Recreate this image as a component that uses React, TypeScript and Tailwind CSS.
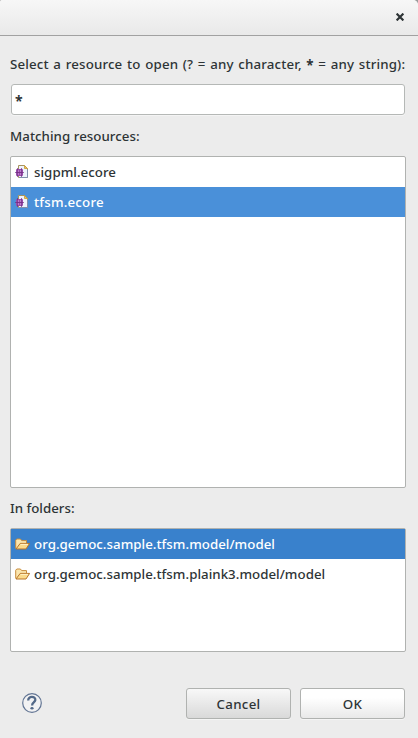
import type { ReactNode } from "react";

function EcoreIcon() {
  return (
    <svg width="16" height="16" viewBox="0 0 16 16" className="shrink-0">
      <path d="M3.5 1.5H9.5L12.5 4.5V13.5H3.5Z" fill="#eef3fc" stroke="#a79360" />
      <path d="M12.5 5.5V13.5H4" fill="none" stroke="#8290ad" />
      <path d="M9.5 1.5V4.5H12.5Z" fill="#edc45c" stroke="#c69a38" strokeWidth=".8" />
      <rect x="1" y="5" width="7" height="7" rx="1" fill="#9a4bab" />
      <path d="M2 6H4V8H2ZM5 6H7V8H5ZM2 9H4V11H2ZM5 9H7V11H5Z" fill="#bd78cc" />
      <path d="M2.5 4V13M6.5 4V13M0 8.5H9" stroke="#6d2c80" strokeWidth=".7" />
    </svg>
  );
}

function FolderIcon() {
  return (
    <svg width="16" height="16" viewBox="0 0 16 16" className="shrink-0">
      <path d="M.7 12.5V4.2L1.8 3H5.4L6.7 4.6H11.5V7.2" fill="#fbe6ae" stroke="#c88d3d" />
      <path d="M1 13L5.2 7.4H14.6L11 13Z" fill="#fbda8b" stroke="#b87428" strokeLinejoin="round" />
      <path d="M5.7 8.4H13" stroke="#fff2c9" />
    </svg>
  );
}

function Row({ icon, children, className }: { icon: ReactNode; children: ReactNode; className?: string }) {
  return (
    <div className={`flex h-[30px] items-center gap-[3px] pl-1 ${className ?? ""}`}>
      {icon}
      <span className="whitespace-nowrap tracking-[0.03px]">{children}</span>
    </div>
  );
}

export default function App() {
  return (
    <div className="h-[738px] w-[418px] bg-[#9b9b9b]">
      <div className="flex h-full flex-col overflow-hidden rounded-tl-[2px] rounded-tr-[5px] bg-[#ececec] font-['Noto_Sans','Open_Sans',sans-serif] text-[13.3px] leading-5 font-medium text-[#2e3436]">
        <header className="flex h-9 shrink-0 items-center justify-end border-b border-[#a1a1a1] bg-linear-to-b from-[#f7f7f7] to-[#e9e9e9] pr-[14px]">
          <svg width="8" height="8" viewBox="0 0 8 8" className="-mt-px">
            <path d="M.6.6L7.4 7.4M7.4.6L.6 7.4" stroke="#2e3436" strokeWidth="2.2" />
          </svg>
        </header>
        <main className="flex flex-1 flex-col pt-[18px] pr-3 pl-[10px]">
          <label className="h-5 whitespace-nowrap tracking-[0.15px] [word-spacing:1.05px]">
            Select a resource to open (? = any character, <span className="inline-block translate-y-px font-bold">*</span> = any string):
          </label>
          <div className="mx-px mt-[10px] flex h-[31px] shrink-0 items-center rounded-[3px] border border-[#b5b8b6] bg-white pt-[3px] pl-[3px] text-[14px] font-bold shadow-[0_1px_0_#f4f4f4]">*</div>
          <div className="mt-[11px] h-5 tracking-[0.04px]"><span>Matching resources:</span></div>
          <section className="mt-[10px] h-[332px] shrink-0 rounded-[2px] border border-[#b0b2b0] bg-white">
            <Row icon={<EcoreIcon />}>sigpml.ecore</Row>
            <Row icon={<EcoreIcon />} className="bg-[#4a90d9] text-white"><span className="tracking-[0.2px]">tfsm.ecore</span></Row>
          </section>
          <div className="mt-[10px] h-5"><span>In folders:</span></div>
          <section className="mt-[10px] h-[124px] shrink-0 rounded-[2px] border border-[#b0b2b0] bg-white">
            <Row icon={<FolderIcon />} className="bg-[#3981cc] text-white">org.gemoc.sample.tfsm.model/model</Row>
            <Row icon={<FolderIcon />}>org.gemoc.sample.tfsm.plaink3.model/model</Row>
          </section>
          <footer className="mt-9 flex h-[31px] items-center pr-px pl-3">
            <svg width="20" height="20" viewBox="0 0 20 20" className="mb-0.5">
              <circle cx="10" cy="10" r="9.3" fill="#f2f2f3" stroke="#617493" strokeWidth="1.2" />
              <path d="M6.2 7.5C6 2.6 13.7 2.8 13.3 7C13 9.5 10.1 9.4 10.1 12.4" fill="none" stroke="#536988" strokeWidth="2.3" />
              <ellipse cx="10" cy="15.3" rx="1.6" ry="1.2" fill="#536988" />
            </svg>
            <button className="ml-auto h-[31px] w-[105px] rounded-[3px] border border-[#b0b2b0] bg-linear-to-b from-[#f8f8f8] to-[#d9d9d9] tracking-[0.3px] shadow-[0_1px_0_#f5f5f5]">Cancel</button>
            <button className="ml-[9px] h-[31px] w-[105px] rounded-[3px] border border-[#b0b2b0] bg-linear-to-b from-white from-30% to-[#e9e9e9] tracking-[0.3px] shadow-[0_1px_0_#f5f5f5]">OK</button>
          </footer>
        </main>
      </div>
    </div>
  );
}
